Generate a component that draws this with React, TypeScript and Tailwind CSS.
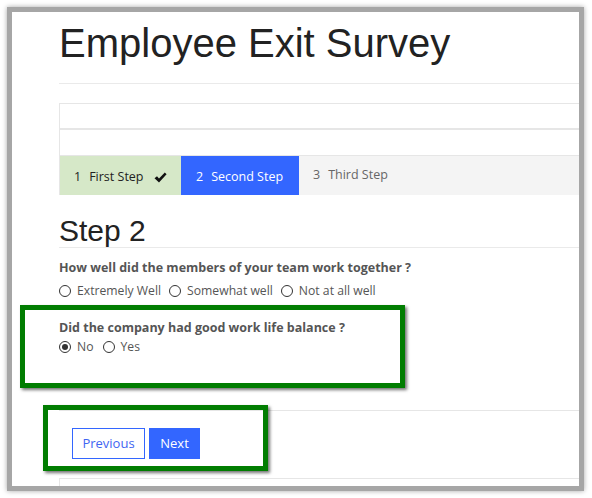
const sans = "font-['Open_Sans','Noto_Sans',sans-serif]";
const heading = "font-['Liberation_Sans',Arial,sans-serif]";

function Radio({ label, checked = false }: { label: string; checked?: boolean }) {
  return (
    <label className="flex items-center">
      <span className="flex h-[12px] w-[12px] items-center justify-center rounded-full border border-[#333] bg-white">
        {checked ? <span className="h-[6px] w-[6px] rounded-full bg-[#333]" /> : null}
      </span>
      <span className="ml-[6px]">{label}</span>
    </label>
  );
}

export default function App() {
  return (
    <div className={`relative h-[498px] w-[592px] overflow-hidden bg-white ${sans}`}>
      <div className="ml-[7px] mt-[7px] h-[484px] w-[577px] overflow-hidden border-[5px] border-[#a6a6a6] bg-white shadow-[0_0_5px_rgba(0,0,0,0.35)]">
        <div className="ml-[47px] w-[560px]">
          <h1 className={`mt-[9px] h-[44px] text-[40px] leading-[44px] text-[#222] ${heading}`}>
            Employee Exit Survey
          </h1>
          <div className="mt-[18px] border-t border-[#eaeaea]" />

          <div className="mt-[19px] border-l border-t border-[#e6e6e6]">
            <div className="h-[26px] border-b-2 border-[#e6e6e6]" />
            <div className="h-[26px] border-b border-[#e6e6e6]" />
            <div className="flex h-[39px] text-[12.5px]">
              <div className="flex w-[121px] items-center bg-[#d6e8c8] pl-[14px] pt-[3px] text-[#222]">
                <span>1</span>
                <span className="ml-[8px]">First Step</span>
                <svg className="ml-[10px]" width="13" height="11" viewBox="0 0 13 11">
                  <path d="M0.5 6.2 L3 4.2 L5 6.6 L10.8 0.6 L12.6 2.3 L5 10.4 Z" fill="#111" />
                </svg>
              </div>
              <div className="flex w-[118px] items-center bg-[#3366ff] pl-[15px] pt-[3px] text-white">
                <span>2</span>
                <span className="ml-[8px]">Second Step</span>
              </div>
              <div className="flex flex-1 items-center bg-[#f4f4f4] pl-[14px] text-[#666]">
                <span>3</span>
                <span className="ml-[8px]">Third Step</span>
              </div>
            </div>
          </div>

          <h2 className={`mt-[19px] h-[34px] border-b border-[#eaeaea] text-[30px] leading-[33px] text-[#222] ${heading}`}>
            Step 2
          </h2>

          <p className="mt-[11px] text-[12.5px] font-bold leading-[18px] text-[#555]">
            How well did the members of your team work together ?
          </p>
          <div className="mt-[5px] flex h-[18px] gap-[8px] text-[12.2px] leading-[18px] text-[#555]">
            <Radio label="Extremely Well" />
            <Radio label="Somewhat well" />
            <Radio label="Not at all well" />
          </div>

          <p className="mt-[19px] text-[12.5px] font-bold leading-[18px] text-[#555]">
            Did the company had good work life balance ?
          </p>
          <div className="mt-[1px] flex h-[18px] gap-[9px] text-[12.2px] leading-[18px] text-[#555]">
            <Radio label="No" checked />
            <Radio label="Yes" />
          </div>

          <div className="mt-[54px] border-t border-[#e6e6e6] pl-[13px] pt-[17px]">
            <div className="flex gap-[4px] text-[13px]">
              <button
                type="button"
                className="h-[31px] w-[73px] border border-[#3366ff] bg-white text-[#3f66f2]"
              >
                Previous
              </button>
              <button type="button" className="h-[31px] w-[51px] bg-[#3366ff] text-white">
                Next
              </button>
            </div>
          </div>

          <div className="mt-[19px] h-[40px] border-l border-t border-[#e6e6e6]" />
        </div>
      </div>

      <div className="absolute left-[20px] top-[305px] h-[83px] w-[385px] border-[5px] border-[#017d01] shadow-[2px_2px_3px_rgba(0,0,0,0.55)]" />
      <div className="absolute left-[43px] top-[405px] h-[66px] w-[225px] border-[5px] border-[#017d01] shadow-[2px_2px_3px_rgba(0,0,0,0.55)]" />
    </div>
  );
}
